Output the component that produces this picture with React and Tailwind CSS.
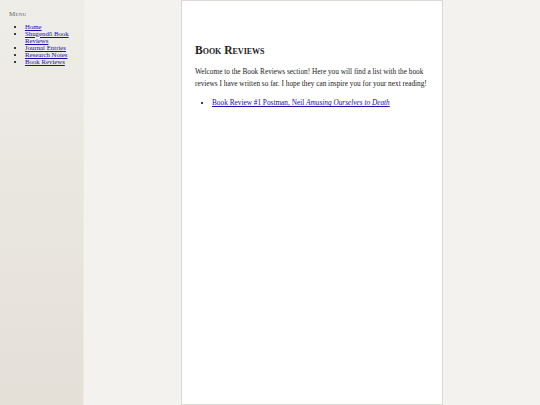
import React from 'react';

const links = ['Home', 'Shugendō Book Reviews', 'Journal Entries', 'Research Notes', 'Book Reviews'];

export default function App() {
  return (
    <div
      className="flex min-h-screen h-[405px] bg-[#f4f2ee]"
      style={{ fontFamily: '"Liberation Serif", "DejaVu Serif", serif' }}
    >
      <aside className="w-[84px] shrink-0 bg-gradient-to-b from-[#efede8] to-[#e4e0d8] border-r border-[#ecebe6] pl-[9px] pr-[14px] pt-[9px]">
        <h3 className="text-[7px] text-[#666] tracking-wide" style={{ fontVariant: 'small-caps' }}>
          Menu
        </h3>
        <ul className="list-disc pl-[16px] mt-[3px] text-[6.8px] leading-[7px]">
          {links.map((l) => (
            <li key={l}>
              <a href="#" className="text-[#1a0dab] underline">{l}</a>
            </li>
          ))}
        </ul>
      </aside>

      <main className="flex-1 flex justify-center">
        <div className="w-[262px] h-full bg-white border border-[#dcd9d4] pl-[13px] pr-[8px] pt-[41px]">
          <h1 className="text-[11.5px] font-bold text-[#222]" style={{ fontVariant: 'small-caps' }}>
            Book Reviews
          </h1>
          <p className="mt-[7px] text-[7.3px] leading-[12px] text-[#222]">
            Welcome to the Book Reviews section! Here you will find a list with the book reviews I have written so far. I hope they can inspire you for your next reading!
          </p>
          <ul className="list-disc pl-[17px] mt-[7px] text-[7.3px] leading-[12px]">
            <li>
              <a href="#" className="text-[#1a0dab] underline">
                Book Review #1 Postman, Neil <i>Amusing Ourselves to Death</i>
              </a>
            </li>
          </ul>
        </div>
      </main>
    </div>
  );
}
